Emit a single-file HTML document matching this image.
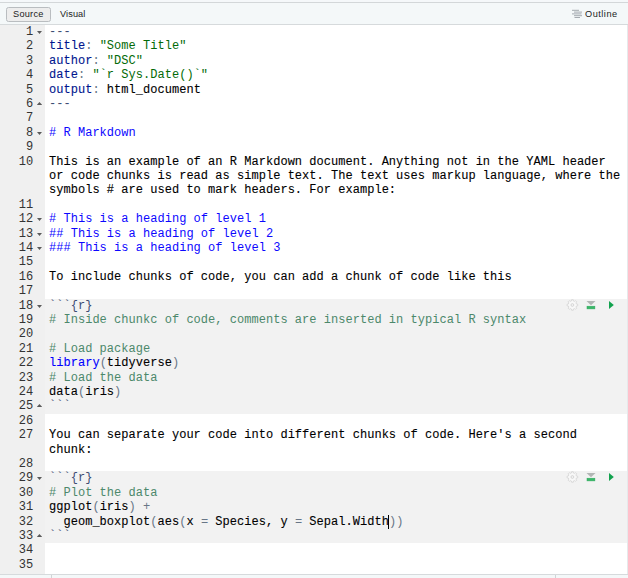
<!DOCTYPE html>
<html><head><meta charset="utf-8"><title>editor</title>
<style>
html,body{margin:0;padding:0;}
body{width:628px;height:578px;overflow:hidden;background:#fff;position:relative;font-family:"Liberation Sans",sans-serif;}
#topstrip{position:absolute;left:0;top:0;width:628px;height:2px;background:#f5f8fa;}
#topline{position:absolute;left:0;top:2px;width:628px;height:1px;background:#d3d7d9;}
#toolbar{position:absolute;left:0;top:3px;width:628px;height:21px;background:#f4f8f9;}
#toolline{position:absolute;left:0;top:24px;width:628px;height:1px;background:#d6dadc;}
#src{position:absolute;left:6px;top:7px;width:43px;height:13px;border:1px solid #b9bdc0;border-radius:2.5px;background:#ededed;}
.tb{position:absolute;top:8px;font-size:10px;line-height:13px;color:#222;white-space:nowrap;}
#gutter{position:absolute;left:0;top:25px;width:45px;height:549px;background:#f0f0f0;}
#rightedge{position:absolute;left:627px;top:25px;width:1px;height:549px;background:#e6e9eb;}
#botline{position:absolute;left:0;top:574px;width:628px;height:1px;background:#d6dadc;}
#status{position:absolute;left:0;top:575px;width:628px;height:3px;background:#f4f8f9;}
.vs{position:absolute;top:575px;width:1px;height:3px;background:#d0d4d6;}
.chunk{position:absolute;left:45px;width:582px;background:#f2f2f2;}
.icons{position:absolute;left:565px;width:60px;height:14px;}
.row{position:absolute;left:0;width:628px;height:14.4px;line-height:14.4px;font-family:"Liberation Mono",monospace;font-size:12px;letter-spacing:0.03px;white-space:pre;color:#000;-webkit-text-stroke:0.1px;}
.g{position:absolute;left:0;top:0;width:45px;height:14.4px;color:#333;-webkit-text-stroke:0;}
.ln{position:absolute;right:11.8px;top:0;}
.fd,.fu{position:absolute;left:36.8px;width:5.4px;height:3.2px;background:#5a5a5a;}
.fd{clip-path:polygon(0 0,100% 0,50% 100%);}
.fu{clip-path:polygon(50% 0,100% 100%,0 100%);}
.t{position:absolute;left:49px;top:0;}
.m{color:#3c4c72;} .t2{} 
.t .t{position:static;}
span.t{color:#00168e;position:static;}
.o{color:#687687;} .p{color:#687687;}
.s,.c,.o,.p,.m,.h{-webkit-text-stroke:0;}
.s{color:#036a07;} .h{color:#0c07ff;} .c{color:#4c886b;} .k{color:#0000ff;}
.cur{display:inline-block;width:0;height:14px;vertical-align:top;position:relative;}
.cur:after{content:"";position:absolute;left:-0.5px;top:0;width:1px;height:14px;background:#000;}
</style></head><body>
<div id="topstrip"></div><div id="topline"></div><div id="toolbar"></div><div id="toolline"></div>
<div id="src"></div>
<div class="tb" style="left:13px;font-size:9.2px;letter-spacing:0.25px">Source</div>
<div class="tb" style="left:60px;font-size:9.2px;letter-spacing:0.1px">Visual</div>
<svg style="position:absolute;left:571px;top:9px" width="12" height="11" viewBox="0 0 12 11"><g stroke="#a4aab0" stroke-width="1"><path d="M1 1.3H8M3 3.1H11M1 4.9H10.5M3 6.7H11M3.5 8.5H9"/></g></svg>
<div class="tb" style="left:585px;top:8.4px;font-size:9.2px;letter-spacing:0.5px">Outline</div>
<div id="gutter"></div><div id="rightedge"></div>
<div class="chunk" style="top:299px;height:115px"></div>
<div class="icons" style="top:299px"><svg width="60" height="14" viewBox="0 0 60 14"><path d="M11.42 4.97 L12.68 5.16 L12.68 6.84 L11.42 7.03 L10.97 8.11 L11.73 9.14 L10.54 10.33 L9.51 9.57 L8.43 10.02 L8.24 11.28 L6.56 11.28 L6.37 10.02 L5.29 9.57 L4.26 10.33 L3.07 9.14 L3.83 8.11 L3.38 7.03 L2.12 6.84 L2.12 5.16 L3.38 4.97 L3.83 3.89 L3.07 2.86 L4.26 1.67 L5.29 2.43 L6.37 1.98 L6.56 0.72 L8.24 0.72 L8.43 1.98 L9.51 2.43 L10.54 1.67 L11.73 2.86 L10.97 3.89 Z" fill="#f8f8f8" stroke="#d7d7d7" stroke-width="0.9" stroke-linejoin="round"/><circle cx="7.4" cy="6" r="1.4" fill="#f2f2f2" stroke="#d2d2d2" stroke-width="0.9"/><path d="M21.5 2 L30.5 2 L26 6.2 Z" fill="#b2b6b5"/><rect x="22" y="7.2" width="7.9" height="2.7" fill="#3ab769" stroke="#2ea95c" stroke-width="0.5"/><path d="M44 1.9 L48.8 6 L44 10.1 Z" fill="#12a24e"/></svg></div>
<div class="chunk" style="top:471px;height:72px"></div>
<div class="icons" style="top:471px"><svg width="60" height="14" viewBox="0 0 60 14"><path d="M11.42 4.97 L12.68 5.16 L12.68 6.84 L11.42 7.03 L10.97 8.11 L11.73 9.14 L10.54 10.33 L9.51 9.57 L8.43 10.02 L8.24 11.28 L6.56 11.28 L6.37 10.02 L5.29 9.57 L4.26 10.33 L3.07 9.14 L3.83 8.11 L3.38 7.03 L2.12 6.84 L2.12 5.16 L3.38 4.97 L3.83 3.89 L3.07 2.86 L4.26 1.67 L5.29 2.43 L6.37 1.98 L6.56 0.72 L8.24 0.72 L8.43 1.98 L9.51 2.43 L10.54 1.67 L11.73 2.86 L10.97 3.89 Z" fill="#f8f8f8" stroke="#d7d7d7" stroke-width="0.9" stroke-linejoin="round"/><circle cx="7.4" cy="6" r="1.4" fill="#f2f2f2" stroke="#d2d2d2" stroke-width="0.9"/><path d="M21.5 2 L30.5 2 L26 6.2 Z" fill="#b2b6b5"/><rect x="22" y="7.2" width="7.9" height="2.7" fill="#3ab769" stroke="#2ea95c" stroke-width="0.5"/><path d="M44 1.9 L48.8 6 L44 10.1 Z" fill="#12a24e"/></svg></div>
<i class="fd" style="top:30.7px"></i>
<div class="row" style="top:25.0px"><div class="g"><span class="ln">1</span></div><div class="t"><span class="m">---</span></div></div>
<div class="row" style="top:39.4px"><div class="g"><span class="ln">2</span></div><div class="t"><span class="t">title</span><span class="o">:</span> <span class="s">&quot;Some Title&quot;</span></div></div>
<div class="row" style="top:53.8px"><div class="g"><span class="ln">3</span></div><div class="t"><span class="t">author</span><span class="o">:</span> <span class="s">&quot;DSC&quot;</span></div></div>
<div class="row" style="top:68.2px"><div class="g"><span class="ln">4</span></div><div class="t"><span class="t">date</span><span class="o">:</span> <span class="s">&quot;`r Sys.Date()`&quot;</span></div></div>
<div class="row" style="top:82.6px"><div class="g"><span class="ln">5</span></div><div class="t"><span class="t">output</span><span class="o">:</span> html_document</div></div>
<i class="fu" style="top:101.9px"></i>
<div class="row" style="top:97.0px"><div class="g"><span class="ln">6</span></div><div class="t"><span class="m">---</span></div></div>
<div class="row" style="top:111.4px"><div class="g"><span class="ln">7</span></div><div class="t"></div></div>
<i class="fd" style="top:131.7px"></i>
<div class="row" style="top:125.8px"><div class="g"><span class="ln">8</span></div><div class="t"><span class="h"># R Markdown</span></div></div>
<div class="row" style="top:140.2px"><div class="g"><span class="ln">9</span></div><div class="t"></div></div>
<div class="row" style="top:154.6px"><div class="g"><span class="ln">10</span></div><div class="t">This is an example of an R Markdown document. Anything not in the YAML header</div></div>
<div class="row" style="top:169.0px"><div class="g"></div><div class="t">or code chunks is read as simple text. The text uses markup language, where the</div></div>
<div class="row" style="top:183.4px"><div class="g"></div><div class="t">symbols # are used to mark headers. For example:</div></div>
<div class="row" style="top:197.8px"><div class="g"><span class="ln">11</span></div><div class="t"></div></div>
<i class="fd" style="top:217.7px"></i>
<div class="row" style="top:212.2px"><div class="g"><span class="ln">12</span></div><div class="t"><span class="h"># This is a heading of level 1</span></div></div>
<i class="fd" style="top:232.7px"></i>
<div class="row" style="top:226.6px"><div class="g"><span class="ln">13</span></div><div class="t"><span class="h">## This is a heading of level 2</span></div></div>
<i class="fd" style="top:246.7px"></i>
<div class="row" style="top:241.0px"><div class="g"><span class="ln">14</span></div><div class="t"><span class="h">### This is a heading of level 3</span></div></div>
<div class="row" style="top:255.4px"><div class="g"><span class="ln">15</span></div><div class="t"></div></div>
<div class="row" style="top:269.8px"><div class="g"><span class="ln">16</span></div><div class="t">To include chunks of code, you can add a chunk of code like this</div></div>
<div class="row" style="top:284.2px"><div class="g"><span class="ln">17</span></div><div class="t"></div></div>
<i class="fd" style="top:304.7px"></i>
<div class="row" style="top:298.6px"><div class="g"><span class="ln">18</span></div><div class="t"><span class="m">```{r}</span></div></div>
<div class="row" style="top:313.0px"><div class="g"><span class="ln">19</span></div><div class="t"><span class="c"># Inside chunkc of code, comments are inserted in typical R syntax</span></div></div>
<div class="row" style="top:327.4px"><div class="g"><span class="ln">20</span></div><div class="t"></div></div>
<div class="row" style="top:341.8px"><div class="g"><span class="ln">21</span></div><div class="t"><span class="c"># Load package</span></div></div>
<div class="row" style="top:356.2px"><div class="g"><span class="ln">22</span></div><div class="t"><span class="k">library</span><span class="p">(</span>tidyverse<span class="p">)</span></div></div>
<div class="row" style="top:370.6px"><div class="g"><span class="ln">23</span></div><div class="t"><span class="c"># Load the data</span></div></div>
<div class="row" style="top:385.0px"><div class="g"><span class="ln">24</span></div><div class="t">data<span class="p">(</span>iris<span class="p">)</span></div></div>
<i class="fu" style="top:403.9px"></i>
<div class="row" style="top:399.4px"><div class="g"><span class="ln">25</span></div><div class="t"><span class="m">```</span></div></div>
<div class="row" style="top:413.8px"><div class="g"><span class="ln">26</span></div><div class="t"></div></div>
<div class="row" style="top:428.2px"><div class="g"><span class="ln">27</span></div><div class="t">You can separate your code into different chunks of code. Here&#x27;s a second</div></div>
<div class="row" style="top:442.6px"><div class="g"></div><div class="t">chunk:</div></div>
<div class="row" style="top:457.0px"><div class="g"><span class="ln">28</span></div><div class="t"></div></div>
<i class="fd" style="top:476.7px"></i>
<div class="row" style="top:471.4px"><div class="g"><span class="ln">29</span></div><div class="t"><span class="m">```{r}</span></div></div>
<div class="row" style="top:485.8px"><div class="g"><span class="ln">30</span></div><div class="t"><span class="c"># Plot the data</span></div></div>
<div class="row" style="top:500.2px"><div class="g"><span class="ln">31</span></div><div class="t">ggplot<span class="p">(</span>iris<span class="p">)</span> <span class="o">+</span></div></div>
<div class="row" style="top:514.6px"><div class="g"><span class="ln">32</span></div><div class="t">  geom_boxplot<span class="p">(</span>aes<span class="p">(</span>x <span class="o">=</span> Species, y <span class="o">=</span> Sepal.Width<b class="cur"></b><span class="p">))</span></div></div>
<i class="fu" style="top:533.9px"></i>
<div class="row" style="top:529.0px"><div class="g"><span class="ln">33</span></div><div class="t"><span class="m">```</span></div></div>
<div class="row" style="top:543.4px"><div class="g"><span class="ln">34</span></div><div class="t"></div></div>
<div class="row" style="top:557.8px"><div class="g"><span class="ln">35</span></div><div class="t"></div></div>
<div id="botline"></div><div id="status"></div><div class="vs" style="left:51px"></div><div class="vs" style="left:555px"></div>
</body></html>
